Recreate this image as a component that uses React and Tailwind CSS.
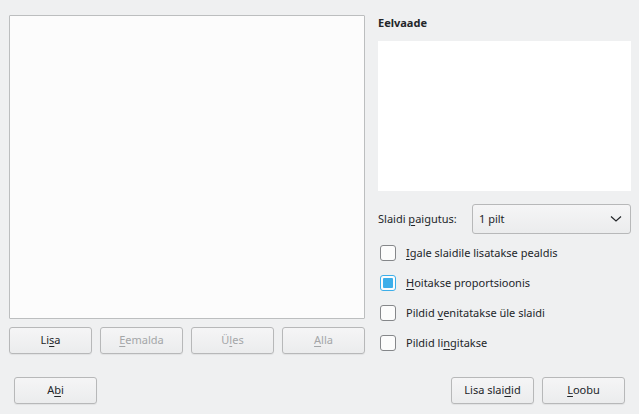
import React from "react";

const font = { fontFamily: '"Noto Sans", "DejaVu Sans", sans-serif' };

function Btn({ children, disabled, className = "" }) {
  return (
    <div
      className={
        "h-[27px] w-[83px] flex items-center justify-center rounded-[3px] border border-[#b7b8b9] bg-gradient-to-b from-[#f5f5f6] to-[#ebeced] text-[11px] shadow-[0_1px_1px_rgba(0,0,0,0.06)] " +
        (disabled ? "text-[#a4a6a8] " : "text-[#232629] ") +
        className
      }
    >
      {children}
    </div>
  );
}

function U({ children }) {
  return <span className="underline underline-offset-[2px]">{children}</span>;
}

function Check({ checked, children }) {
  return (
    <div className="h-[30px] flex items-center">
      <div
        className={
          "ml-[2px] w-[16px] h-[16px] rounded-[3px] border flex items-center justify-center bg-[#fcfcfc] " +
          (checked ? "border-[#3daee9]" : "border-[#85878a]")
        }
      >
        {checked && <div className="w-[10px] h-[10px] bg-[#3daee9] rounded-[1px]" />}
      </div>
      <div className="ml-[10px] text-[11px] text-[#232629]">{children}</div>
    </div>
  );
}

export default function App() {
  return (
    <div
      className="w-[639px] h-[414px] bg-[#eff0f1] flex flex-col text-[#232629] overflow-hidden"
      style={font}
    >
      <div className="flex pt-[15px] pl-[9px]">
        <div className="flex flex-col w-[356px]">
          <div className="h-[304px] border border-[#bcbebf] bg-[#fcfcfc] rounded-[1px]" />
          <div className="flex gap-[8px] mt-[8px]">
            <Btn>
              Li<U>s</U>a
            </Btn>
            <Btn disabled>
              <U>E</U>emalda
            </Btn>
            <Btn disabled>
              Ü<U>l</U>es
            </Btn>
            <Btn disabled>
              <U>A</U>lla
            </Btn>
          </div>
        </div>
        <div className="flex flex-col ml-[13px] w-[253px]">
          <div className="text-[11px] font-bold leading-[15px]">Eelvaade</div>
          <div className="mt-[11px] h-[150px] bg-white" />
          <div className="mt-[13px] flex items-center h-[30px]">
            <div className="text-[11px] w-[94px]">
              Slaidi <U>p</U>aigutus:
            </div>
            <div className="flex-1 h-[30px] rounded-[3px] border border-[#b7b8b9] bg-gradient-to-b from-[#f5f5f6] to-[#ebeced] flex items-center pl-[6px] pr-[8px] text-[11px]">
              <span className="flex-1">1 pilt</span>
              <svg width="12" height="8" viewBox="0 0 12 8">
                <path d="M1 1.5 L6 6 L11 1.5" fill="none" stroke="#232629" strokeWidth="1.2" />
              </svg>
            </div>
          </div>
          <div className="mt-[4px] flex flex-col">
            <Check>
              <U>I</U>gale slaidile lisatakse pealdis
            </Check>
            <Check checked>
              <U>H</U>oitakse proportsioonis
            </Check>
            <Check>
              Pildid <U>v</U>enitatakse üle slaidi
            </Check>
            <Check>
              Pildid li<U>n</U>gitakse
            </Check>
          </div>
        </div>
      </div>
      <div className="flex mt-[19px] px-[14px]">
        <Btn>
          A<U>b</U>i
        </Btn>
        <div className="flex-1" />
        <Btn>
          Lisa slai<U>d</U>id
        </Btn>
        <Btn className="ml-[8px]">
          <U>L</U>oobu
        </Btn>
      </div>
    </div>
  );
}
